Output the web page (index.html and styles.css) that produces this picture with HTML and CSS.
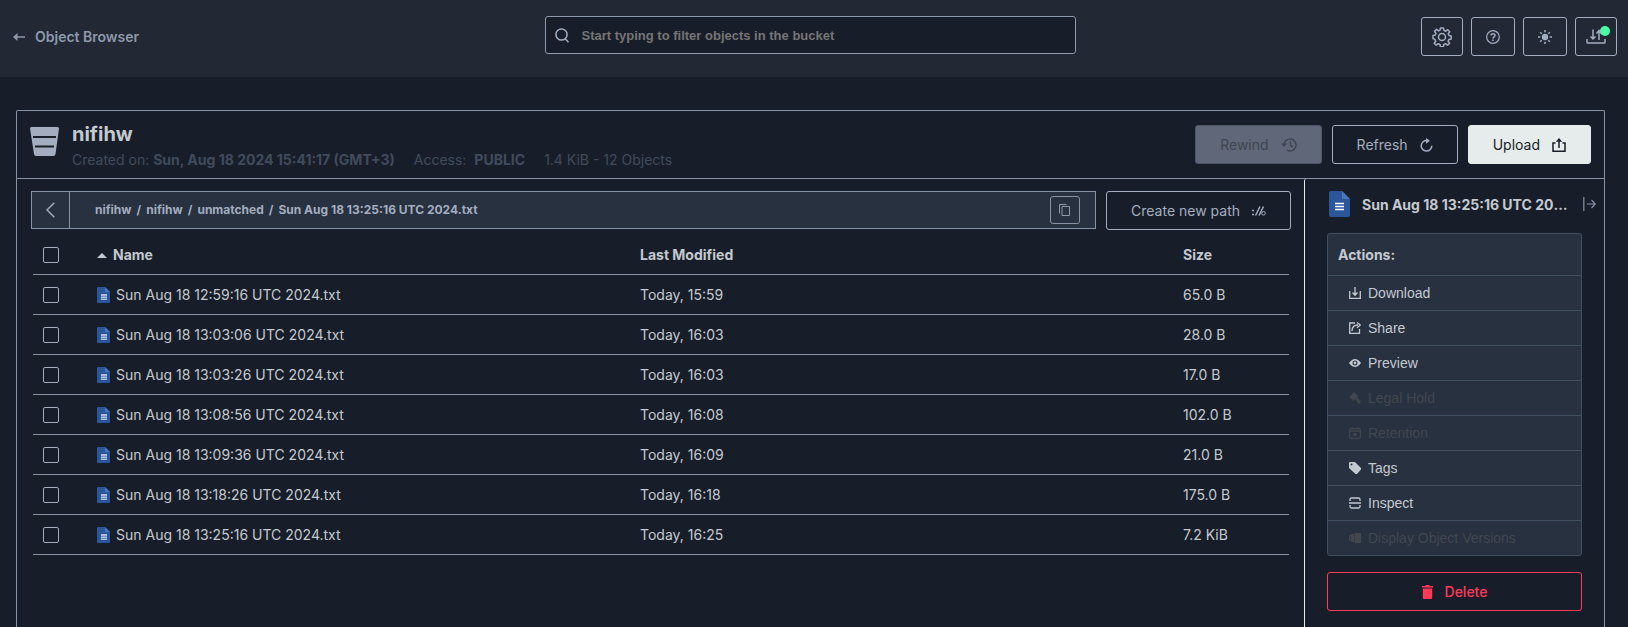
FILE: index.html
```html
<!DOCTYPE html>
<html lang="en">
<head>
<meta charset="utf-8">
<title>Object Browser</title>
<link rel="stylesheet" href="styles.css">
</head>
<body>
<svg class="defs" aria-hidden="true">
  <symbol id="doc" viewBox="0 0 21 26"><path fill="#2b579a" d="M2 0h11l8 8v16a2 2 0 0 1-2 2H2a2 2 0 0 1-2-2V2a2 2 0 0 1 2-2z"/><path fill="#4a76b8" d="M13 0l8 8h-8z"/><path d="M6 12.500h9M6 15.500h9M6 18.500h9" stroke="#fff" stroke-width="1.300"/></symbol>
  <symbol id="doc-small" viewBox="0 0 13 16"><path fill="#2b579a" d="M1 0h7l5 5v10a1 1 0 0 1-1 1H1a1 1 0 0 1-1-1V1a1 1 0 0 1 1-1z"/><path fill="#4a76b8" d="M8 0l5 5H8z"/><path fill="#a9bad8" d="M4 7h6v6H4z"/><path d="M4 9.500h6M4 11.500h6" stroke="#5f80b5" stroke-width=".6"/></symbol>
</svg>
<header class="topbar">
  <a class="back" href="#"><svg width="12" height="8" viewBox="0 0 12 8"><path d="M12 4H3" fill="none" stroke="currentColor" stroke-width="1.500"/><path d="M0 4l4.500-4v8z" fill="currentColor"/></svg>Object Browser</a>
  <label class="search">
    <svg width="14" height="15" viewBox="0 0 14 15" fill="none" stroke="currentColor" stroke-width="1.500"><circle cx="6.500" cy="6.500" r="5.600"/><path d="M10 10.500l3.500 3.700"/></svg>
    <input type="text" aria-label="Filter objects" placeholder="Start typing to filter objects in the bucket">
  </label>
  <nav class="tools">
    <button class="tool" aria-label="Settings"><svg width="20" height="20" viewBox="0 0 20 20" fill="none" stroke="currentColor" stroke-width="1.500" stroke-linejoin="round"><path d="M8.500 1h3l.4 2.400 1.800.8 2-1.500 2 2-1.500 2 .8 1.800 2.200.5v3l-2.300.4-.8 1.800 1.500 2-2 2-2-1.500-1.800.8-.4 2.300h-3l-.4-2.300-1.800-.8-2 1.500-2-2 1.500-2-.8-1.800L1 11.500v-3l2.200-.4.800-1.800-1.500-2 2-2 2 1.500 1.600-.7z"/><circle cx="10" cy="10" r="3.500"/></svg></button>
    <button class="tool tool-wide" aria-label="Help"><svg width="14" height="14" viewBox="0 0 14 14" fill="none" stroke="currentColor"><circle cx="7" cy="7" r="6.300" stroke-width="1.200"/><path d="M5 5.600C5 3 9 3 9 5.500 9 7 7 6.800 7 8.500M7 9.500V11" stroke-width="1.500"/></svg></button>
    <button class="tool tool-wide" aria-label="Light mode"><svg width="14" height="14" viewBox="0 0 14 14" stroke="currentColor" stroke-width="1.500"><circle cx="7" cy="7" r="3.200" fill="currentColor" stroke="none"/><path d="M7 0v2.300M7 11.700V14M0 7h2.300M11.700 7H14M2.200 2.200l1.500 1.500M10.300 10.300l1.500 1.500M2.200 11.800l1.500-1.500M10.300 3.700l1.500-1.500"/></svg></button>
    <button class="tool" aria-label="Transfers"><svg width="20" height="15" viewBox="0 0 20 15" fill="none" stroke="currentColor" stroke-width="1.500"><path d="M1 10v3.200q0 .8.800.8h16.400q.8 0 .8-.8V10M7 .5V10M4.500 7.500L7 10l2.500-2.500M13 11V2M10.500 4.500L13 1.500l2.500 3"/></svg><span class="dot"></span></button>
  </nav>
</header>
<main class="card">
  <section class="bucket">
    <svg class="bucket-icon" width="29" height="29" viewBox="0 0 29 29"><path fill="currentColor" d="M1.500 0h26Q29 0 29 1.500L25.500 27q-.3 2-2 2H6q-1.700 0-2-2L0 1.500Q0 0 1.500 0z"/><path stroke="#191e29" stroke-width="2" d="M3 10h23M5 19.500h19"/></svg>
    <div class="bucket-text">
      <h1>nifihw</h1>
      <p class="meta"><span>Created on: <b class="created">Sun, Aug 18 2024 15:41:17 (GMT+3)</b></span><span>Access: <b class="access">PUBLIC</b></span><span>1.4 KiB - 12 Objects</span></p>
    </div>
    <div class="bucket-actions">
      <button class="btn rewind" disabled>Rewind <svg width="16" height="14" viewBox="0 0 16 14" fill="none" stroke="currentColor" stroke-width="1.500"><path d="M3 7a6 6 0 1 1 3 5.200M9.500 3.500V7.500l2.500 1.500"/><path d="M0 5.500h6L3 9z" fill="currentColor" stroke="none"/></svg></button>
      <button class="btn">Refresh <svg width="13" height="14" viewBox="0 0 13 14" fill="none" stroke="currentColor" stroke-width="1.500"><path d="M7 2.500A5.300 5.300 0 1 0 11.800 7.800"/><path d="M6 0l4 2.700-4 3z" fill="currentColor" stroke="none"/></svg></button>
      <button class="btn primary">Upload <svg width="14" height="14" viewBox="0 0 14 14" fill="none" stroke="currentColor" stroke-width="1.500"><path d="M3.500 5H1v8.200h12V5h-2.500M7 10V2"/><path d="M3.800 3.800L7 0l3.200 3.800z" fill="currentColor" stroke="none"/></svg></button>
    </div>
  </section>
  <div class="content">
    <section class="browser">
      <div class="pathbar">
        <div class="crumbs">
          <button class="crumb-back" aria-label="Back"><svg width="9" height="16" viewBox="0 0 9 16" fill="none" stroke="currentColor" stroke-width="1.500"><path d="M8.300.7L1 8l7.300 7.300"/></svg></button>
          <nav class="trail"><a href="#">nifihw</a><span>/</span><a href="#">nifihw</a><span>/</span><a href="#">unmatched</a><span>/</span><a href="#">Sun Aug 18 13:25:16 UTC 2024.txt</a></nav>
          <button class="copy" aria-label="Copy path"><svg width="12" height="12" viewBox="0 0 12 12" fill="none" stroke="currentColor"><path d="M3 2.500h7.500v9H3z"/><path d="M.5 9.500v-9h7"/></svg></button>
        </div>
        <button class="btn">Create new path <svg width="14" height="10" viewBox="0 0 14 10" fill="none" stroke="currentColor" stroke-width="1.500"><path d="M0 4.500h2M0 8.500h2M3.500 9.500L8 .5M7 9.500l4.500-9"/><circle cx="11.500" cy="7.300" r="1.800" stroke-width="1"/></svg></button>
      </div>
      <table class="files">
        <thead><tr><th class="check"><input type="checkbox" aria-label="Select all"></th><th class="name"><span class="sort"></span>Name</th><th class="modified">Last Modified</th><th class="size">Size</th></tr></thead>
        <tbody>
          <tr><td class="check"><input type="checkbox" aria-label="Select 12:59:16"></td><td class="name"><svg width="13" height="16"><use href="#doc-small"/></svg>Sun Aug 18 12:59:16 UTC 2024.txt</td><td>Today, 15:59</td><td>65.0 B</td></tr>
          <tr><td class="check"><input type="checkbox" aria-label="Select 13:03:06"></td><td class="name"><svg width="13" height="16"><use href="#doc-small"/></svg>Sun Aug 18 13:03:06 UTC 2024.txt</td><td>Today, 16:03</td><td>28.0 B</td></tr>
          <tr><td class="check"><input type="checkbox" aria-label="Select 13:03:26"></td><td class="name"><svg width="13" height="16"><use href="#doc-small"/></svg>Sun Aug 18 13:03:26 UTC 2024.txt</td><td>Today, 16:03</td><td>17.0 B</td></tr>
          <tr><td class="check"><input type="checkbox" aria-label="Select 13:08:56"></td><td class="name"><svg width="13" height="16"><use href="#doc-small"/></svg>Sun Aug 18 13:08:56 UTC 2024.txt</td><td>Today, 16:08</td><td>102.0 B</td></tr>
          <tr><td class="check"><input type="checkbox" aria-label="Select 13:09:36"></td><td class="name"><svg width="13" height="16"><use href="#doc-small"/></svg>Sun Aug 18 13:09:36 UTC 2024.txt</td><td>Today, 16:09</td><td>21.0 B</td></tr>
          <tr><td class="check"><input type="checkbox" aria-label="Select 13:18:26"></td><td class="name"><svg width="13" height="16"><use href="#doc-small"/></svg>Sun Aug 18 13:18:26 UTC 2024.txt</td><td>Today, 16:18</td><td>175.0 B</td></tr>
          <tr><td class="check"><input type="checkbox" aria-label="Select 13:25:16"></td><td class="name"><svg width="13" height="16"><use href="#doc-small"/></svg>Sun Aug 18 13:25:16 UTC 2024.txt</td><td>Today, 16:25</td><td>7.2 KiB</td></tr>
        </tbody>
      </table>
    </section>
    <aside class="details">
      <div class="details-head">
        <svg width="21" height="26"><use href="#doc"/></svg>
        <h2>Sun Aug 18 13:25:16 UTC 2024.txt</h2>
        <button class="collapse" aria-label="Close panel"><svg width="13" height="14" viewBox="0 0 13 14" fill="none" stroke="currentColor" stroke-width="1.200"><path d="M.8 0v14M4 7h8M8.500 3l3.700 4-3.700 4"/></svg></button>
      </div>
      <div class="actions">
        <h3>Actions:</h3>
        <button><svg viewBox="0 0 12 12" fill="none" stroke="currentColor" stroke-width="1.300"><path d="M.7 4v7.300h10.600V4M6 0v7.500M3.500 5.500L6 8.300l2.500-2.800"/></svg>Download</button>
        <button><svg viewBox="0 0 12 12" fill="none" stroke="currentColor" stroke-width="1.300"><path d="M6 1H.7v10.300h9.800V7M3 9c0-4 2-6 6-6M8 .5L11.300 3 8 5.800"/></svg>Share</button>
        <button><svg viewBox="0 0 12 12"><path fill="currentColor" fill-rule="evenodd" d="M0 6q6-8 12 0-6 8-12 0zM6 3.500a2.500 2.500 0 1 0 0 5 2.500 2.500 0 0 0 0-5z"/><circle cx="6" cy="6" r="1.400" fill="currentColor"/></svg>Preview</button>
        <button disabled><svg viewBox="0 0 12 12" fill="currentColor"><path d="M0 5l5-5 4 4-5 5-1.500-1.500L3 7z"/><path d="M6 7l2-2 4 4.500L10 12z"/></svg>Legal Hold</button>
        <button disabled><svg viewBox="0 0 12 12" fill="none" stroke="currentColor" stroke-width="1.300"><rect x=".7" y="1.700" width="10.600" height="9.600" rx="1"/><path d="M.7 4h10.600M3 0v2M9 0v2"/><circle cx="6" cy="7.500" r="1.800" fill="currentColor" stroke="none"/></svg>Retention</button>
        <button><svg viewBox="0 0 12 12"><path fill="currentColor" fill-rule="evenodd" d="M0 1Q0 0 1 0h5l6 6q.5 1 0 1.500L8 12q-1 .5-1.500 0L0 6zM2.500 1.500a1 1 0 1 0 0 2 1 1 0 0 0 0-2z"/></svg>Tags</button>
        <button><svg viewBox="0 0 12 12" fill="none" stroke="currentColor" stroke-width="1.300"><path d="M1 4V2.500Q1 1 2.500 1h7Q11 1 11 2.500V4M0 6h12M1 8v1.500Q1 11 2.500 11h7q1.500 0 1.500-1.500V8"/></svg>Inspect</button>
        <button disabled><svg viewBox="0 0 12 12" fill="currentColor"><path d="M0 3h1.500v6H0zM2 2h3v8H2zM5.500 1H12v10H5.500z"/></svg>Display Object Versions</button>
      </div>
      <button class="btn delete"><svg width="11" height="14" viewBox="0 0 11 14" fill="currentColor"><path d="M0 1h3.500V0h4v1H11v1.500H0zM.8 3.500h9.400V12.500q0 1.500-1.500 1.500H2.300Q.8 14 .8 12.500z"/></svg>Delete</button>
    </aside>
  </div>
</main>
</body>
</html>
```
FILE: styles.css
```css
* { box-sizing: border-box; }
body { margin: 0; min-height: 100vh; display: flex; flex-direction: column; background: #181e29; color: #c4c9d0; font: 14px/20px Inter, sans-serif; }
h1, h2, h3, p { margin: 0; }
a { color: inherit; text-decoration: none; }
button { font: inherit; color: inherit; background: none; border: 0; padding: 0; margin: 0; }
svg { display: block; flex: none; }
.defs { position: absolute; width: 0; height: 0; }

.topbar { display: grid; grid-template-columns: 1fr 531px 1fr; align-items: center; height: 77px; padding: 0 11px 4px 13px; background: #222834; color: #a3adbf; }
.back { display: flex; align-items: center; gap: 10px; color: #8e99ab; font-weight: 600; }
.search { display: flex; align-items: center; gap: 6px; height: 38px; margin: 0 5px 3px -5px; padding-left: 9px; background: #181e29; border: 1px solid #8e99ab; border-radius: 3px; }
.search input { flex: 1; min-width: 0; height: 100%; padding: 0 7px; border: 0; outline: 0; background: none; color: #c4c9d0; font: bold 13px "Liberation Sans", sans-serif; }
.search { width: 531px; }
.search input::placeholder { color: #757575; opacity: 1; }
.tools { display: flex; justify-content: flex-end; gap: 8px; }
.tool { position: relative; display: grid; place-items: center; width: 42px; height: 39px; border: 1px solid #a3adbf; border-radius: 3px; }
.tool-wide { width: 44px; }
.dot { position: absolute; top: 8px; right: 6px; width: 10px; height: 10px; border-radius: 50%; background: #4cfba8; }

.card { flex: 1; display: flex; flex-direction: column; margin: 33px 23px 0 16px; border: 1px solid #8792a5; border-bottom: 0; border-radius: 2px 2px 0 0; }
.bucket { display: flex; align-items: center; height: 68px; padding: 0 13px; border-bottom: 1px solid #8792a5; }
.bucket-icon { color: #a3adbf; margin: 0 13px 6px 0; }
.bucket-text { flex: 1; padding-top: 2px; }
h1 { font-size: 20px; line-height: 24px; color: #c4c9d0; padding-bottom: 4px; }
.meta { display: flex; gap: 19px; color: #404b5c; font-weight: 400; }
.meta b { font-weight: 700; }
.access { margin-left: 4px; }
.bucket-actions { display: flex; gap: 10px; }
.btn { display: flex; align-items: center; justify-content: center; gap: 12px; height: 39px; padding: 0 24px; border: 1px solid #a3adbf; border-radius: 3px; color: #a3adbf; white-space: nowrap; }
.rewind { background: #5f6778; border-color: #4e5665; color: #404550; }
.primary { background: #e6ebeb; border-color: #e6ebeb; color: #181e29; }

.content { flex: 1; display: flex; }
.browser { flex: 1; min-width: 0; padding: 12px 13px 0 14px; }
.pathbar { display: flex; gap: 10px; }
.crumbs { flex: 1; display: flex; align-items: center; height: 38px; padding-right: 15px; background: #283140; border: 1px solid #8792a5; color: #a3adbf; }
.crumb-back { display: grid; place-items: center; width: 38px; height: 100%; border-right: 1px solid #8792a5; }
.trail { flex: 1; display: flex; gap: 5px; padding-left: 25px; font-size: 12px; font-weight: 700; }
.copy { display: grid; place-items: center; width: 30px; height: 28px; border: 1px solid #8792a5; border-radius: 3px; color: #8e99ab; }
.files { width: calc(100% - 4px); margin: 4px 2px 0; border-collapse: collapse; table-layout: fixed; }
.files th, .files td { height: 40px; padding: 2px 0 0; text-align: left; border-bottom: 1px solid #8792a5; vertical-align: middle; }
.files .check { width: 64px; padding-left: 10px; }
.modified { width: 543px; }
.size { width: 106px; }
.files input { display: block; appearance: none; width: 16px; height: 16px; margin: 0; border: 1px solid #a3adbf; border-radius: 2px; }
.name svg { display: inline-block; vertical-align: middle; margin: -2px 6px 0 0; }
.sort { display: inline-block; margin-right: 6px; border: 5px solid transparent; border-top: 0; border-bottom-color: #c4c9d0; vertical-align: middle; }

.details { width: 300px; padding: 12px 22px 0; border-left: 1px solid #e6ebeb; border-radius: 2px 0 0 0; }
.details-head { display: flex; align-items: center; gap: 12px; margin: 0 -14px 16px 2px; }
.details-head h2 { flex: 1; min-width: 0; overflow: hidden; text-overflow: ellipsis; white-space: nowrap; font-size: 14px; padding-top: 2px; }
.collapse { color: #8792a5; }
.actions { border: 1px solid #404f60; border-radius: 3px; background: #283140; }
.actions h3 { font-size: 14px; padding: 11px 10px 10px; }
.actions button { display: flex; align-items: center; gap: 7px; width: 100%; height: 35px; padding-left: 21px; border-top: 1px solid #404f60; font-family: "Liberation Sans", sans-serif; }
.actions svg { width: 12px; height: 12px; }
.actions button:disabled { color: #42474f; }
.delete { width: 100%; margin-top: 16px; border-color: #ff3958; color: #ff3958; font-weight: 500; }
```
